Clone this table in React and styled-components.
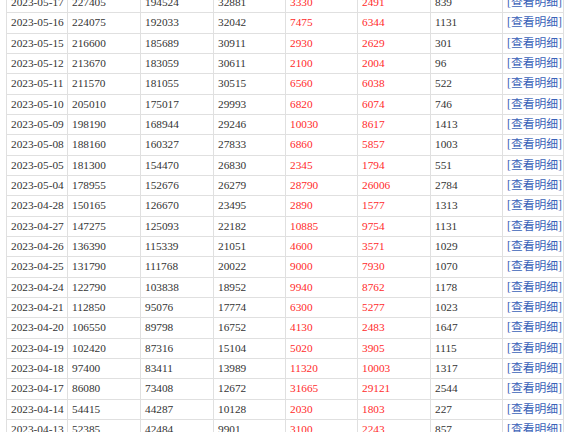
import React from 'react';
import styled, { createGlobalStyle } from 'styled-components';

const rows = [
  ['2023-05-17', 227405, 194524, 32881, 3330, 2491, 839],
  ['2023-05-16', 224075, 192033, 32042, 7475, 6344, 1131],
  ['2023-05-15', 216600, 185689, 30911, 2930, 2629, 301],
  ['2023-05-12', 213670, 183059, 30611, 2100, 2004, 96],
  ['2023-05-11', 211570, 181055, 30515, 6560, 6038, 522],
  ['2023-05-10', 205010, 175017, 29993, 6820, 6074, 746],
  ['2023-05-09', 198190, 168944, 29246, 10030, 8617, 1413],
  ['2023-05-08', 188160, 160327, 27833, 6860, 5857, 1003],
  ['2023-05-05', 181300, 154470, 26830, 2345, 1794, 551],
  ['2023-05-04', 178955, 152676, 26279, 28790, 26006, 2784],
  ['2023-04-28', 150165, 126670, 23495, 2890, 1577, 1313],
  ['2023-04-27', 147275, 125093, 22182, 10885, 9754, 1131],
  ['2023-04-26', 136390, 115339, 21051, 4600, 3571, 1029],
  ['2023-04-25', 131790, 111768, 20022, 9000, 7930, 1070],
  ['2023-04-24', 122790, 103838, 18952, 9940, 8762, 1178],
  ['2023-04-21', 112850, 95076, 17774, 6300, 5277, 1023],
  ['2023-04-20', 106550, 89798, 16752, 4130, 2483, 1647],
  ['2023-04-19', 102420, 87316, 15104, 5020, 3905, 1115],
  ['2023-04-18', 97400, 83411, 13989, 11320, 10003, 1317],
  ['2023-04-17', 86080, 73408, 12672, 31665, 29121, 2544],
  ['2023-04-14', 54415, 44287, 10128, 2030, 1803, 227],
  ['2023-04-13', 52385, 42484, 9901, 3100, 2243, 857],
];

const widths = [61, 73, 73, 72, 72, 73, 72, 61];

const GlobalStyle = createGlobalStyle`
  html, body {
    margin: 0;
    padding: 0;
    background: #fff;
    overflow: hidden;
  }
`;

const Wrapper = styled.div`
  padding-left: 6px;
  margin-top: -8px;
`;

const Table = styled.table`
  border-collapse: collapse;
  table-layout: fixed;
  width: 557px;
  font-family: "Liberation Serif", "Noto Sans CJK SC", serif;
  font-size: 11.3px;
  color: #333;
`;

const Cell = styled.td`
  border: 1px solid #e0e0e0;
  padding: 3px 4px;
  line-height: 13.33px;
  white-space: nowrap;
  overflow: hidden;
  color: ${(p) => (p.$red ? '#ff2a2a' : '#333')};
`;

const Detail = styled.a`
  color: #3a62b8;
  text-decoration: none;
  font-size: 11.8px;
  font-family: "Liberation Serif", "Noto Sans CJK SC", serif;
`;

export default function App() {
  return (
    <>
      <GlobalStyle />
      <Wrapper>
        <Table>
          <colgroup>
            {widths.map((w, i) => (
              <col key={i} style={{ width: w }} />
            ))}
          </colgroup>
          <tbody>
            {rows.map((r) => (
              <tr key={r[0]}>
                <Cell>{r[0]}</Cell>
                <Cell>{r[1]}</Cell>
                <Cell>{r[2]}</Cell>
                <Cell>{r[3]}</Cell>
                <Cell $red>{r[4]}</Cell>
                <Cell $red>{r[5]}</Cell>
                <Cell>{r[6]}</Cell>
                <Cell>
                  <Detail href="#">[查看明细]</Detail>
                </Cell>
              </tr>
            ))}
          </tbody>
        </Table>
      </Wrapper>
    </>
  );
}
